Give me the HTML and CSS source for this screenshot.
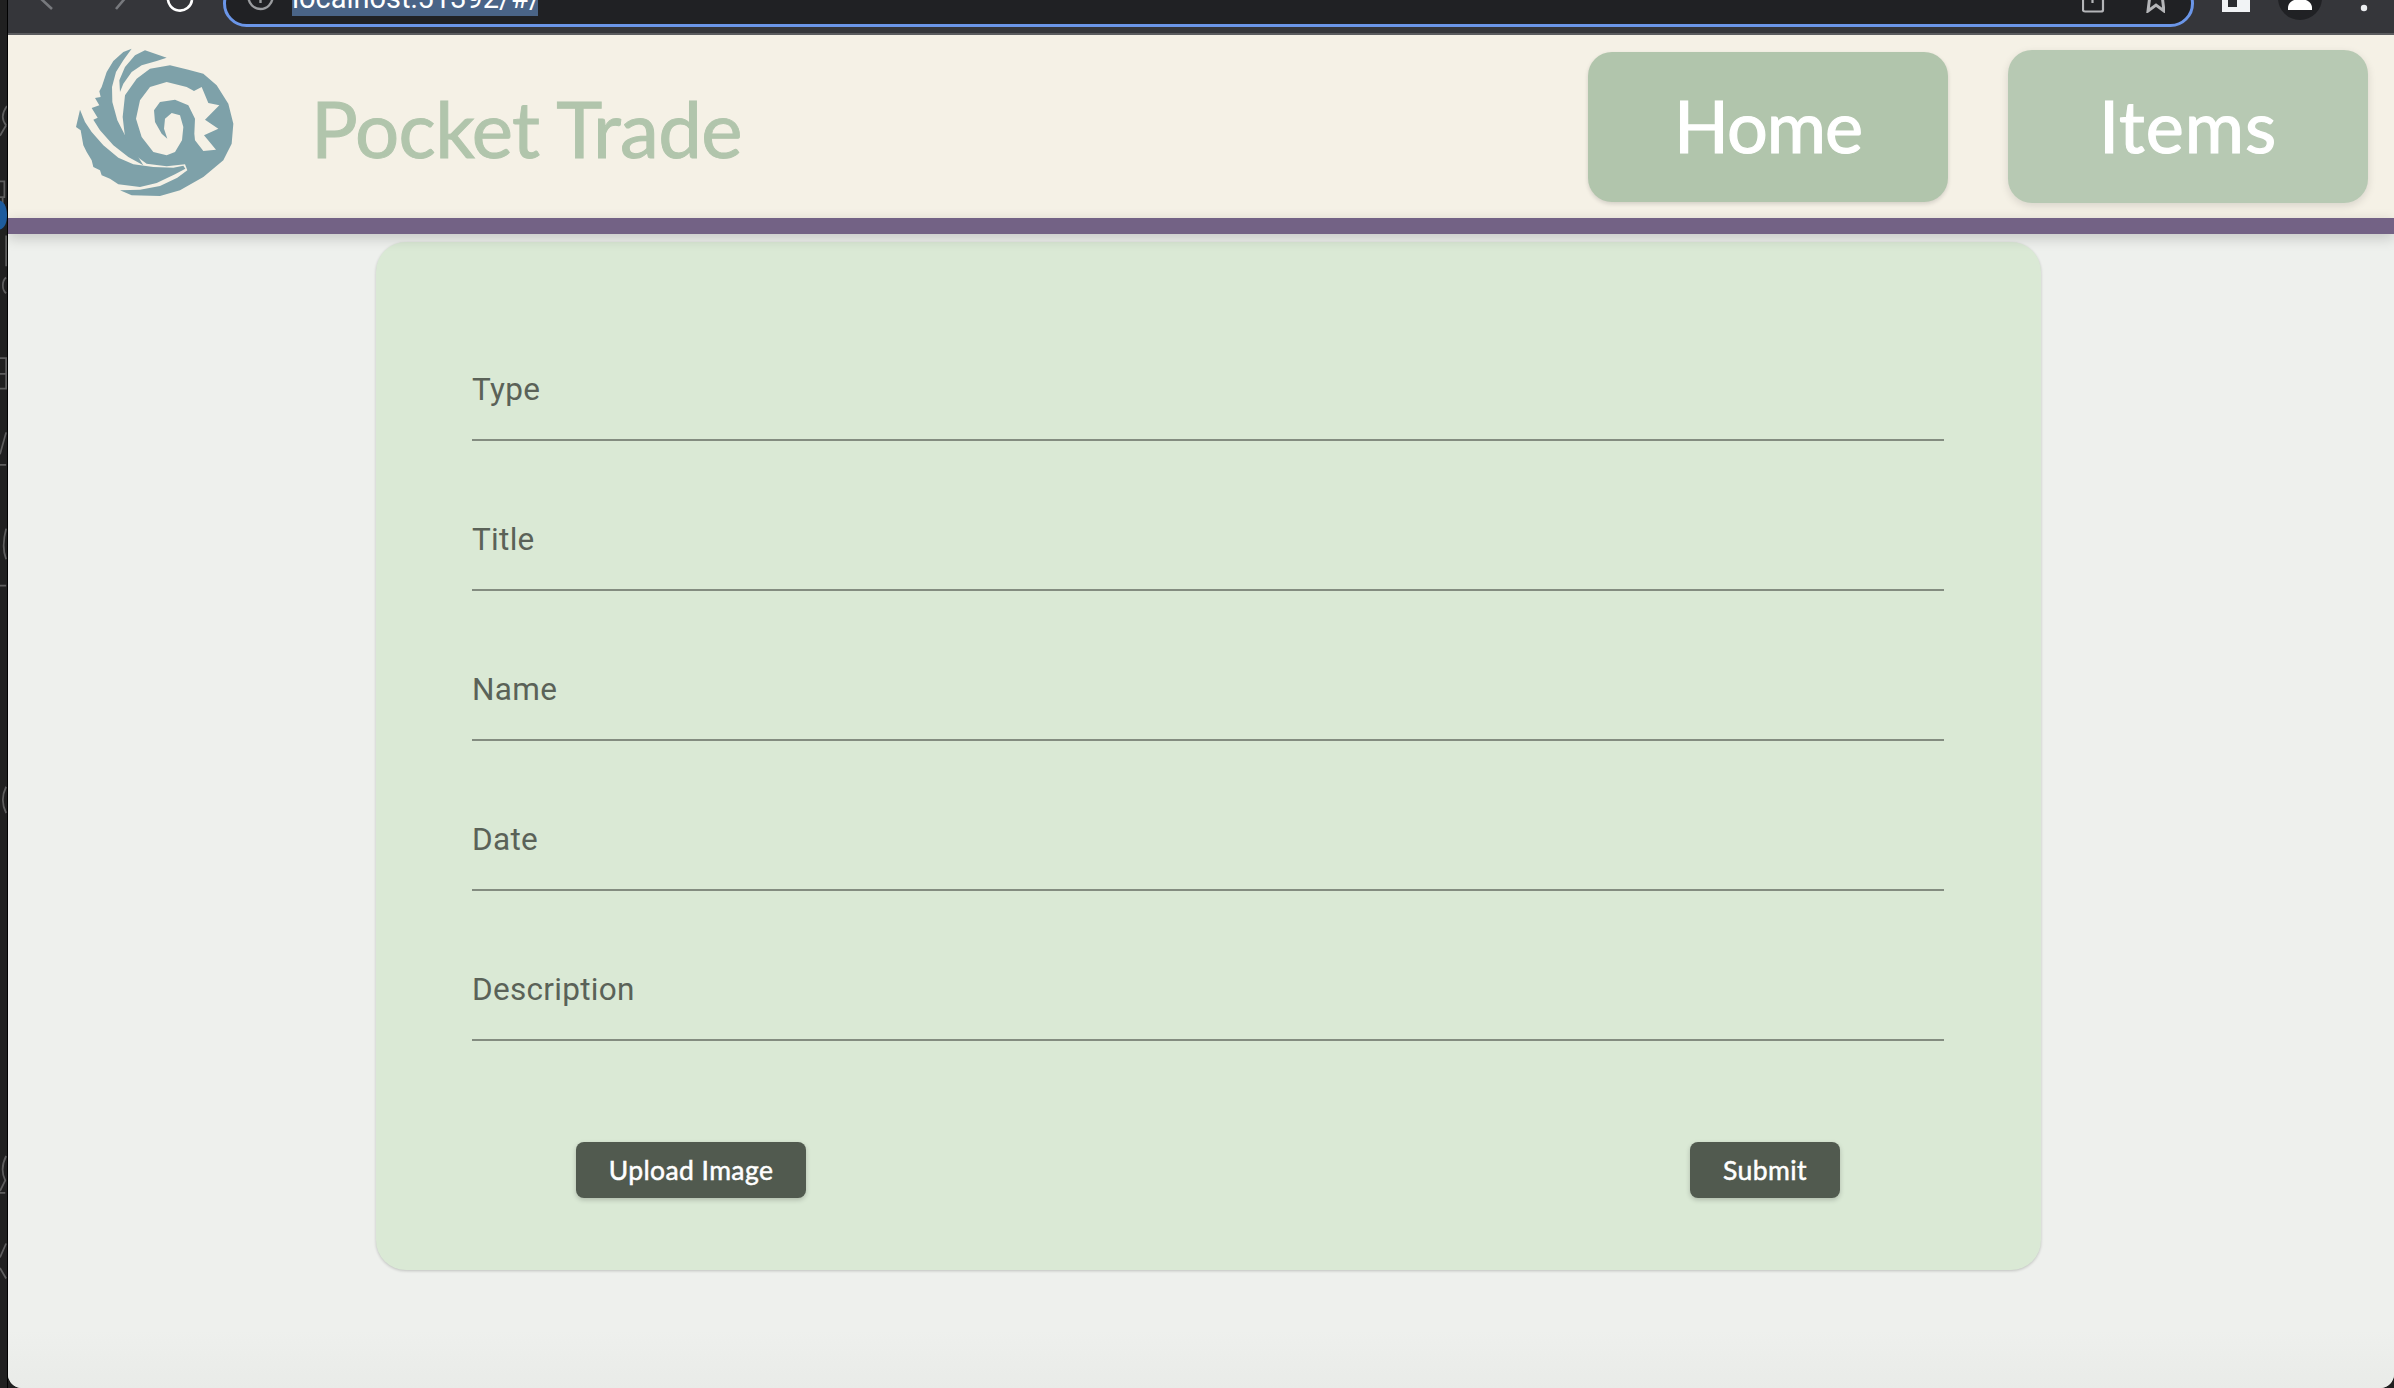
FILE: index.html
```html
<!DOCTYPE html>
<html lang="en">
<head>
<meta charset="utf-8">
<title>Pocket Trade</title>
<link rel="stylesheet" href="styles.css">
</head>
<body>
<div class="desktop">
  <svg class="strip" viewBox="0 0 8 1388" width="8" height="1388" aria-hidden="true">
    <g fill="none" stroke="#5e5e5e" stroke-width="2">
      <path d="M8 22C2 30 2 38 7 44M7 44L0 56"/>
      <path d="M0 108H5V126H0M3 126V146"/>
      <path d="M7 205V170M7 236C2 232 2 222 7 218"/>
      <path d="M0 310H7V345H0M0 328H7"/>
      <path d="M7 395L0 420M0 432H7"/>
      <path d="M7 505C3 520 3 530 7 540M0 570H7"/>
      <path d="M7 800C2 810 2 820 7 830"/>
      <path d="M7 1222C2 1232 2 1242 6 1250L0 1262M0 1264H6"/>
      <path d="M7 1322L0 1338M7 1362L0 1350"/>
    </g>
    <path d="M0 130C6 132 8 140 8 147S6 161 0 163Z" fill="#1d5c9e"/>
  </svg>
  <div class="window">
    <div class="chrome">
      <svg class="nav-icons" viewBox="0 0 215 35" width="215" height="35" aria-hidden="true">
        <path d="M30 -4L44 9M119 -4L108 9" fill="none" stroke="#77797d" stroke-width="2.6"/>
        <path d="M160 -3A12 12 0 0 0 184 0" fill="none" stroke="#fff" stroke-width="2.6"/>
      </svg>
      <div class="address">
        <svg class="info" viewBox="0 0 27 28" width="27" height="28" aria-hidden="true">
          <circle cx="13.500" cy="14" r="12" fill="none" stroke="#9a9c9f" stroke-width="2.400"/>
          <path d="M13.500 6V20" stroke="#9a9c9f" stroke-width="2.400"/>
        </svg>
        <span class="url">localhost:51392/#/</span>
        <svg class="addr-icons" viewBox="0 0 83 30" width="83" height="30" aria-hidden="true">
          <path d="M10.500 6V20M1 13V27Q1 28.500 3 28.500H19Q21 28.500 21 27V13" fill="none" stroke="#b4b5b8" stroke-width="2.200"/>
          <path d="M74 0L80 12L82 28L74 22L66 28L68 12Z" fill="none" stroke="#b4b5b8" stroke-width="3"/>
        </svg>
      </div>
      <svg class="right-icons" viewBox="0 0 198 35" width="198" height="35" aria-hidden="true">
        <path d="M26 -2H54V12H26Z" fill="#f1f3f5"/>
        <path d="M32 -2H41V7H32Z" fill="#2a2b2f"/>
        <circle cx="104" cy="-2" r="22" fill="#202124"/>
        <path d="M92 10V8C92 2 98 -1 104 -1S116 2 116 8V10Z" fill="#fff"/>
        <circle cx="168" cy="8" r="3.200" fill="#eceef0"/>
      </svg>
    </div>
    <header class="topbar">
      <svg class="logo" viewBox="45 50 480 450" width="160" height="150" role="img" aria-label="Pocket Trade logo">
        <g fill="#7ea1a9">
          <path d="M215 55L190 65L160 92L140 125L125 170L118 183L122 200L105 203L118 225L95 233L113 262L100 268L120 300L160 345L205 380L250 405L225 365L195 315L172 270L157 215L156 170L168 125L190 90Z"/>
          <path d="M60 238L48 290L62 300L70 345L80 365L95 390L100 410L120 420L125 435L150 445L175 462L240 470L290 458L345 432L376 415L370 406L340 412L280 410L220 402L175 382L130 345L95 305L75 275Z"/>
          <path d="M255 60L320 82L290 92L245 105L215 125L190 160L180 185L178 150L195 110L225 75Z"/>
          <path fill-rule="evenodd" d="M180 480L215 495L300 497L360 480L430 440L490 390L515 340L520 280L505 220L470 165L430 130L385 118L330 105L270 115L230 145L195 195L188 260L195 320L225 375L260 400L320 408L375 402L382 420L352 442L300 467L240 478Z M335 248L360 255L370 290L366 330L345 365L320 375L280 365L245 320L228 265L240 210L270 170L320 155L380 170L402 182L425 170L445 218L478 225L435 268L475 295L432 315L468 358L430 362L405 330L403 310L405 265L385 225L345 208L300 215L282 240L285 275L305 310L322 325L312 295L315 265Z"/>
        </g>
      </svg>
      <h1 class="brand">Pocket Trade</h1>
      <nav class="nav">
        <a class="nav-btn">Home</a>
        <a class="nav-btn nav-btn-hover">Items</a>
      </nav>
    </header>
    <div class="rule"></div>
    <main class="content">
      <form class="card">
        <div class="field"><label class="label">Type</label></div>
        <div class="field"><label class="label">Title</label></div>
        <div class="field"><label class="label">Name</label></div>
        <div class="field"><label class="label">Date</label></div>
        <div class="field"><label class="label">Description</label></div>
        <div class="actions">
          <button type="button" class="btn btn-upload">Upload Image</button>
          <button type="button" class="btn btn-submit">Submit</button>
        </div>
      </form>
    </main>
  </div>
</div>
</body>
</html>
```
FILE: styles.css
```css
* { box-sizing: border-box; }
html, body { margin: 0; padding: 0; height: 100%; background: #202020; overflow: hidden; }
.desktop { display: flex; width: 2394px; height: 1388px; }
.strip { flex: none; display: block; border-right: 1px solid #000; }
.window {
  flex: 1;
  display: flex;
  flex-direction: column;
  min-width: 0;
  background: #eef0ed;
  border-radius: 0 0 14px 14px;
  overflow: hidden;
}
.chrome {
  flex: none;
  display: flex;
  height: 35px;
  background: #35363a;
  border-bottom: 2px solid #5b5c5f;
  overflow: visible;
}
.nav-icons, .right-icons { flex: none; display: block; overflow: hidden; }
.address {
  flex: none;
  display: flex;
  align-items: flex-start;
  width: 1971px;
  height: 47px;
  margin-top: -20px;
  margin-right: 2px;
  background: #202124;
  border: 3px solid #6b96e8;
  border-radius: 26px;
}
.info { flex: none; margin-left: 21px; }
.url {
  margin-left: 18px;
  margin-top: -3px;
  height: 36px;
  width: 246px;
  background: #4a6487;
  color: #fff;
  font: 400 29px/36px Roboto, sans-serif;
  white-space: nowrap;
  overflow: hidden;
}
.addr-icons { flex: none; margin-left: auto; margin-right: 26px; }
.topbar {
  flex: none;
  display: flex;
  align-items: center;
  height: 183px;
  padding-left: 67px;
  padding-right: 26px;
  background: #f5f1e6;
}
.logo { flex: none; margin-bottom: 10px; }
.brand {
  margin: 3px 0 0 76px;
  color: #b1c5ac;
  font: 400 78px/1 Lato, sans-serif;
  letter-spacing: -.7px;
  -webkit-text-stroke: 1px #b1c5ac;
}
.nav { display: flex; align-items: center; gap: 60px; margin-left: auto; }
.nav-btn {
  display: flex;
  align-items: center;
  justify-content: center;
  width: 360px;
  height: 150px;
  padding-bottom: 4px;
  border-radius: 24px;
  background: #b1c5ac;
  color: #fff;
  font: 400 72px/1 Lato, sans-serif;
  letter-spacing: -1px;
  -webkit-text-stroke: 1.2px #fff;
  box-shadow: 0 2px 4px rgba(0, 0, 0, .14);
}
.nav-btn-hover {
  height: 153px;
  background: #b7c9b3;
  letter-spacing: 1px;
  box-shadow: 0 3px 8px rgba(0, 0, 0, .12);
}
.rule {
  position: relative;
  flex: none;
  height: 16px;
  background: #736285;
  box-shadow: 0 4px 14px rgba(0, 0, 0, .18);
}
.content {
  flex: 1;
  padding-top: 8px;
  padding-left: 368px;
  background: linear-gradient(to bottom, #eef0ed 0, #eef0ed 95%, #e9ebe8 100%);
}
.card {
  width: 1665px;
  padding: 49px 97px 72px 96px;
  background: #dae9d5;
  border-radius: 30px;
  box-shadow: 0 1px 3px rgba(0, 0, 0, .2);
}
.field {
  display: flex;
  align-items: flex-end;
  height: 150px;
  padding-bottom: 31px;
  border-bottom: 2px solid #838c80;
}
.label {
  color: #5a6258;
  font: 400 31.500px/36px Roboto, sans-serif;
  letter-spacing: .3px;
}
.actions {
  display: flex;
  justify-content: space-between;
  margin-top: 101px;
  padding: 0 104px;
}
.btn {
  height: 56px;
  padding: 0;
  border: 0;
  border-radius: 8px;
  background: #515a4f;
  color: #fff;
  font: 400 26.500px/1 Lato, sans-serif;
  letter-spacing: .4px;
  -webkit-text-stroke: .5px #fff;
  box-shadow: 0 2px 5px rgba(0, 0, 0, .2);
}
.btn-upload { width: 230px; }
.btn-submit { width: 150px; }
```
